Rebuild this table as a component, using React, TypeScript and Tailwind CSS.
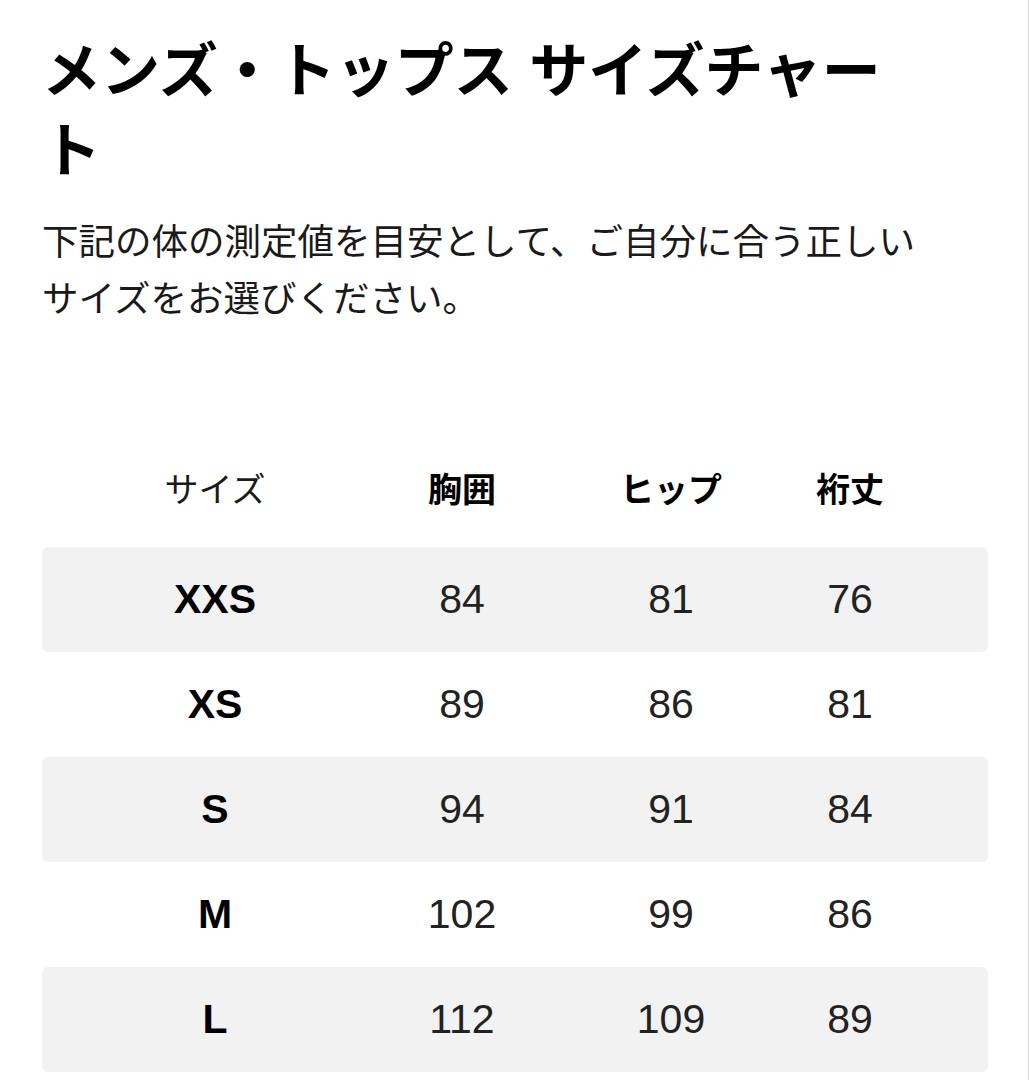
import React from 'react';

interface SizeRow {
  size: string;
  chest: number;
  hip: number;
  sleeve: number;
}

const rows: SizeRow[] = [
  { size: 'XXS', chest: 84, hip: 81, sleeve: 76 },
  { size: 'XS', chest: 89, hip: 86, sleeve: 81 },
  { size: 'S', chest: 94, hip: 91, sleeve: 84 },
  { size: 'M', chest: 102, hip: 99, sleeve: 86 },
  { size: 'L', chest: 112, hip: 109, sleeve: 89 },
];

const fontStack = { fontFamily: '"Liberation Sans", "Noto Sans CJK JP", sans-serif' };

const App: React.FC = () => {
  return (
    <div className="min-h-screen w-[1029px] bg-white border-r border-[#dcdcdc] text-black" style={fontStack}>
      {/* Heading */}
      <div className="pl-[42px] pt-[32px] w-[930px]">
        <h1 className="text-[59px] font-bold leading-[80px] text-black">
          メンズ・トップス サイズチャート
        </h1>
        <p className="mt-[22px] text-[36.5px] leading-[57px] text-[#1a1a1a]">
          下記の体の測定値を目安として、ご自分に合う正しいサイズをお選びください。
        </p>
      </div>

      {/* Size table */}
      <div className="ml-[42px] w-[946px] mt-[112px]">
        <div className="grid grid-cols-[346px_148px_270px_88px_1fr] h-[100px] items-center text-[34px] mb-[7px]">
          <span className="text-center font-normal text-[#1a1a1a]">サイズ</span>
          <span className="text-center font-bold">胸囲</span>
          <span className="text-center font-bold">ヒップ</span>
          <span className="text-center font-bold">裄丈</span>
          <span />
        </div>

        {rows.map((row, index) => (
          <div
            key={row.size}
            className={`grid grid-cols-[346px_148px_270px_88px_1fr] h-[105px] items-center rounded-[6px] text-[41px] ${
              index % 2 === 0 ? 'bg-[#f2f2f2]' : 'bg-white'
            }`}
          >
            <span className="text-center font-bold">{row.size}</span>
            <span className="text-center text-[#222222]">{row.chest}</span>
            <span className="text-center text-[#222222]">{row.hip}</span>
            <span className="text-center text-[#222222]">{row.sleeve}</span>
            <span />
          </div>
        ))}
      </div>
    </div>
  );
};

export default App;
